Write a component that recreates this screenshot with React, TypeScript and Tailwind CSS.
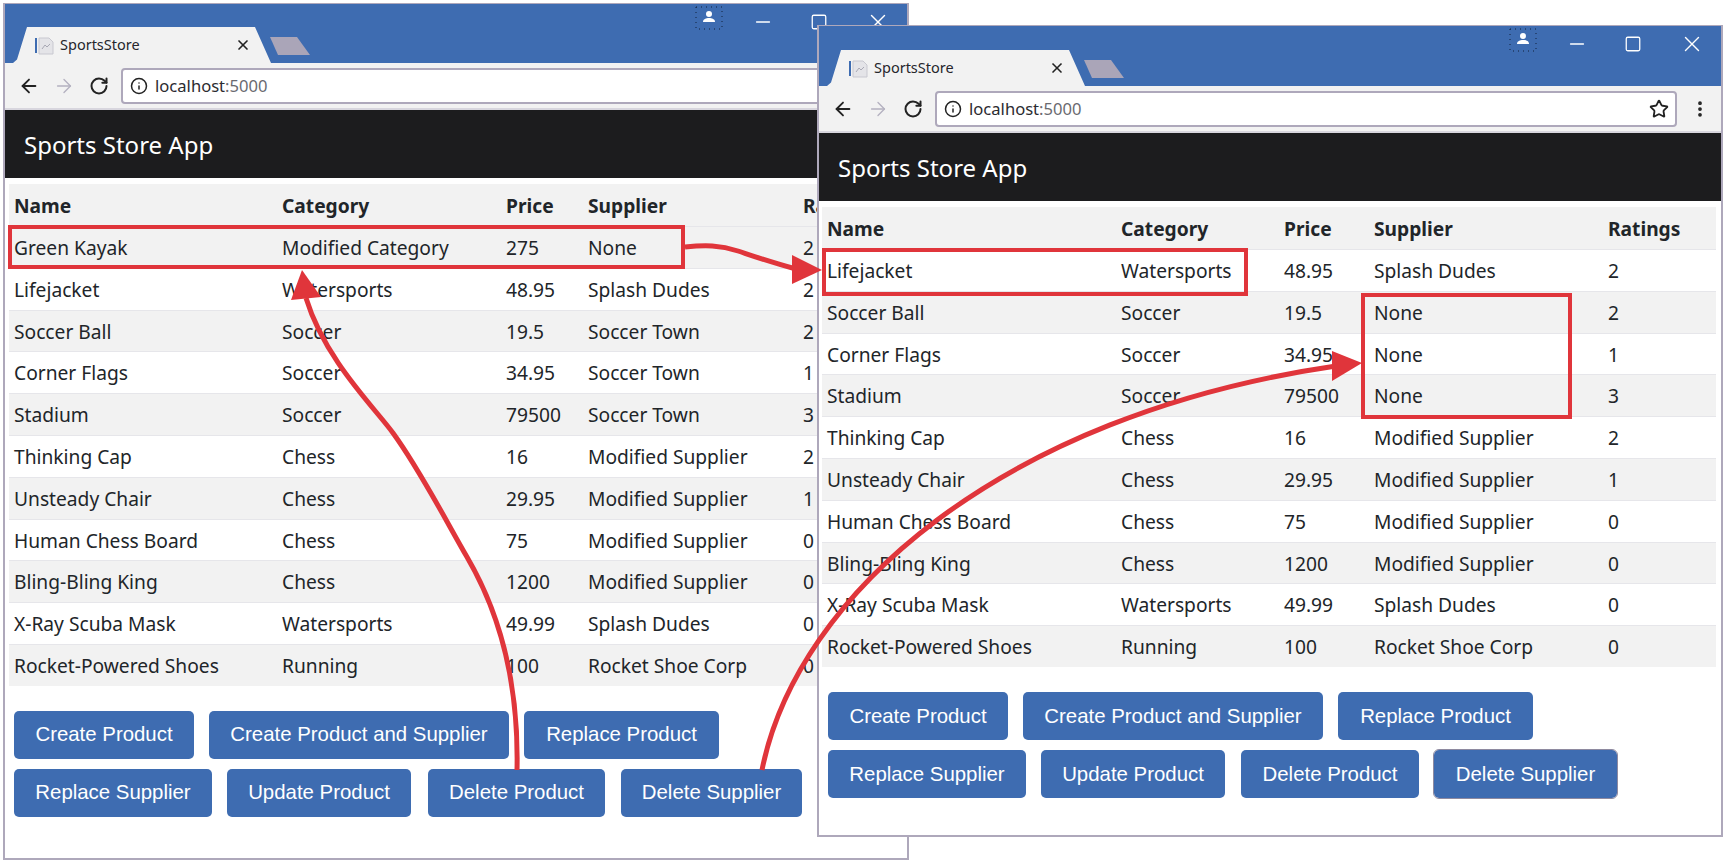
import { ArrowLeft, ArrowRight, EllipsisVertical, Info, Minus, RotateCw, Square, Star, X } from 'lucide-react'

type Row = [string, string, string, string, string]

const leftRows: Row[] = [
  ['Green Kayak', 'Modified Category', '275', 'None', '2'],
  ['Lifejacket', 'Watersports', '48.95', 'Splash Dudes', '2'],
  ['Soccer Ball', 'Soccer', '19.5', 'Soccer Town', '2'],
  ['Corner Flags', 'Soccer', '34.95', 'Soccer Town', '1'],
  ['Stadium', 'Soccer', '79500', 'Soccer Town', '3'],
  ['Thinking Cap', 'Chess', '16', 'Modified Supplier', '2'],
  ['Unsteady Chair', 'Chess', '29.95', 'Modified Supplier', '1'],
  ['Human Chess Board', 'Chess', '75', 'Modified Supplier', '0'],
  ['Bling-Bling King', 'Chess', '1200', 'Modified Supplier', '0'],
  ['X-Ray Scuba Mask', 'Watersports', '49.99', 'Splash Dudes', '0'],
  ['Rocket-Powered Shoes', 'Running', '100', 'Rocket Shoe Corp', '0'],
]

const rightRows: Row[] = [
  ['Lifejacket', 'Watersports', '48.95', 'Splash Dudes', '2'],
  ['Soccer Ball', 'Soccer', '19.5', 'None', '2'],
  ['Corner Flags', 'Soccer', '34.95', 'None', '1'],
  ['Stadium', 'Soccer', '79500', 'None', '3'],
  ['Thinking Cap', 'Chess', '16', 'Modified Supplier', '2'],
  ['Unsteady Chair', 'Chess', '29.95', 'Modified Supplier', '1'],
  ['Human Chess Board', 'Chess', '75', 'Modified Supplier', '0'],
  ['Bling-Bling King', 'Chess', '1200', 'Modified Supplier', '0'],
  ['X-Ray Scuba Mask', 'Watersports', '49.99', 'Splash Dudes', '0'],
  ['Rocket-Powered Shoes', 'Running', '100', 'Rocket Shoe Corp', '0'],
]

const Btn = ({ label, className = '' }: { label: string; className?: string }) => (
  <button
    type="button"
    className={`h-[48px] rounded-[5px] bg-[#3e6cb1] text-center font-['Liberation_Sans',sans-serif] text-[20.4px] text-white ${className}`}
  >
    {label}
  </button>
)

const Favicon = () => (
  <svg width="20" height="20" viewBox="0 0 20 20" fill="none">
    <rect x="0" y="3" width="2" height="15" fill="#3e6cb1" />
    <path d="M4 3h10l4 4v12H4z" fill="#e4e4e8" stroke="#c8c8d0" />
    <path d="M7 14l3-4 2 2 3-3" stroke="#a8a8b4" />
  </svg>
)

const Profile = () => (
  <svg width="28" height="24" viewBox="0 0 28 24" fill="none">
    <rect x="1" y="1" width="26" height="22" stroke="#10203a" strokeDasharray="1 4" />
    <circle cx="14" cy="8" r="3" fill="white" />
    <path d="M8 16c0-3 3-4 6-4s6 1 6 4z" fill="white" />
  </svg>
)

const Chrome = ({ blueHeight }: { blueHeight: string }) => (
  <>
    <div className={`flex shrink-0 items-end bg-[#3e6cb1] pl-[8px] ${blueHeight}`}>
      <div className="flex h-[36px] w-[258px] items-center bg-[#f2f2f2] pl-[22px] pr-[20px] [clip-path:polygon(0_100%,4px_90%,14px_0,242px_0,258px_100%)]">
        <Favicon />
        <span className="ml-[5px] flex-1 font-['Noto_Sans',sans-serif] text-[14.5px] text-[#26262c]">SportsStore</span>
        <X size={16} strokeWidth={2.5} className="text-[#222]" />
      </div>
      <div className="mb-[8px] ml-[-1px] h-[18px] w-[40px] bg-[#aaa5b8] [clip-path:polygon(0_0,27px_0,40px_100%,8px_100%)]" />
      <div className="mb-auto ml-auto mt-[2px] flex items-start text-white">
        <Profile />
        <Minus size={22} strokeWidth={1.5} className="ml-[29px] mt-[5px]" />
        <Square size={18} strokeWidth={1.7} className="ml-[36px] mt-[7px]" />
        <X size={26} strokeWidth={1.3} className="ml-[37px] mr-[16px] mt-[3px]" />
      </div>
    </div>
    <div className="flex h-[47px] shrink-0 items-center border-b-2 border-[#d8d6de] bg-[#f2f2f2] pl-[13px] text-[#222]">
      <ArrowLeft size={22} strokeWidth={2} />
      <ArrowRight size={22} strokeWidth={1.5} className="ml-[13px] text-[#b4b1c0]" />
      <RotateCw size={20} strokeWidth={2.4} className="ml-[14px]" />
      <div className="ml-[12px] flex h-[36px] w-[742px] items-center rounded-[4px] border-2 border-[#aea8bb] bg-white pl-[7px] pr-[6px]">
        <Info size={18} strokeWidth={2} />
        <span className="ml-[7px] flex-1 pt-[1px] font-['Noto_Sans',sans-serif] text-[16.6px] text-[#2b2b30]">
          localhost<span className="text-[#6a6a70]">:5000</span>
        </span>
        <Star size={20} strokeWidth={2.2} />
      </div>
      <EllipsisVertical size={20} strokeWidth={2.5} className="ml-[13px]" />
    </div>
    <div className="flex h-[68px] shrink-0 items-center bg-[#1c1c1e] pl-[19px] pt-[2px] font-['Noto_Sans',sans-serif] text-[24px] text-white">
      Sports Store App
    </div>
  </>
)

const Table = ({ rows, cols, odd }: { rows: Row[]; cols: string; odd: string }) => (
  <div className="font-['Noto_Sans',sans-serif] text-[19.2px] text-[#212529]">
    <div className={`grid h-[42px] items-center bg-[#f2f2f2] pl-[5px] pt-[2px] font-bold ${cols}`}>
      {['Name', 'Category', 'Price', 'Supplier', 'Ratings'].map((h) => (
        <div key={h}>{h}</div>
      ))}
    </div>
    {rows.map((r) => (
      <div key={r[0]} className={`grid h-[41.8px] items-center border-t border-[#e6e6ea] pl-[5px] pt-[2px] ${cols} ${odd}`}>
        {r.map((c, i) => (
          <div key={i} className="whitespace-nowrap">{c}</div>
        ))}
      </div>
    ))}
  </div>
)

export default function App() {
  return (
    <div className="relative h-[863px] w-[1725px] overflow-hidden bg-white">
      {/* left window */}
      <div className="absolute left-[3px] top-[3px] flex h-[857px] w-[906px] flex-col border-x-2 border-b-2 border-t border-[#aea8bb] bg-white">
        <Chrome blueHeight="h-[59px]" />
        <div className="ml-[4px] mr-[6px] mt-[6px]">
          <Table rows={leftRows} cols="grid-cols-[268px_224px_82px_215px_1fr]" odd="even:bg-[#f2f2f2]" />
        </div>
        <div className="ml-[9px] mt-[25px] flex flex-col gap-[10px]">
          <div className="flex gap-[15px]">
            <Btn label="Create Product" className="w-[180px]" />
            <Btn label="Create Product and Supplier" className="w-[300px]" />
            <Btn label="Replace Product" className="w-[195px]" />
          </div>
          <div className="flex gap-[15px]">
            <Btn label="Replace Supplier" className="w-[198px]" />
            <Btn label="Update Product" className="w-[184px]" />
            <Btn label="Delete Product" className="ml-[2px] w-[177px]" />
            <Btn label="Delete Supplier" className="ml-[1px] w-[181px]" />
          </div>
        </div>
      </div>

      {/* right window */}
      <div className="absolute left-[817px] top-[25px] flex h-[812px] w-[906px] flex-col border-x-2 border-b-2 border-t border-[#aea8bb] bg-white">
        <Chrome blueHeight="h-[60px]" />
        <div className="ml-[3px] mr-[5px] mt-[6px]">
          <Table rows={rightRows} cols="grid-cols-[294px_163px_90px_234px_1fr]" odd="odd:bg-[#f2f2f2]" />
        </div>
        <div className="ml-[9px] mt-[25px] flex flex-col gap-[10px]">
          <div className="flex gap-[15px]">
            <Btn label="Create Product" className="w-[180px]" />
            <Btn label="Create Product and Supplier" className="w-[300px]" />
            <Btn label="Replace Product" className="w-[195px]" />
          </div>
          <div className="flex gap-[15px]">
            <Btn label="Replace Supplier" className="w-[198px]" />
            <Btn label="Update Product" className="w-[184px]" />
            <Btn label="Delete Product" className="ml-[1px] w-[178px]" />
            <Btn label="Delete Supplier" className="w-[183px] outline outline-1 outline-[#8e8aa0]" />
          </div>
        </div>
      </div>

      {/* callouts */}
      <div className="absolute left-[8px] top-[225px] h-[44px] w-[677px] border-4 border-[#e0353b]" />
      <div className="absolute left-[822px] top-[248px] h-[48px] w-[426px] border-4 border-[#e0353b]" />
      <div className="absolute left-[1361px] top-[293px] h-[126px] w-[211px] border-4 border-[#e0353b]" />

      <svg className="absolute left-0 top-0" width="1725" height="863" fill="none">
        <path d="M685 247C705 245 720 245 738 251S770 262 796 269" stroke="#e0353b" strokeWidth="5" />
        <path d="M822 270L792 255V284Z" fill="#e0353b" />
        <path d="M517 770C519 680 498 610 467 557C445 519 420 470 393 433C375 408 325 360 306 298" stroke="#e0353b" strokeWidth="5" />
        <path d="M302 270L291 300L321 297Z" fill="#e0353b" />
        <path d="M762 770C797 595 1000 415 1336 366" stroke="#e0353b" strokeWidth="5" />
        <path d="M1362 363L1332 351V381Z" fill="#e0353b" />
      </svg>
    </div>
  )
}
